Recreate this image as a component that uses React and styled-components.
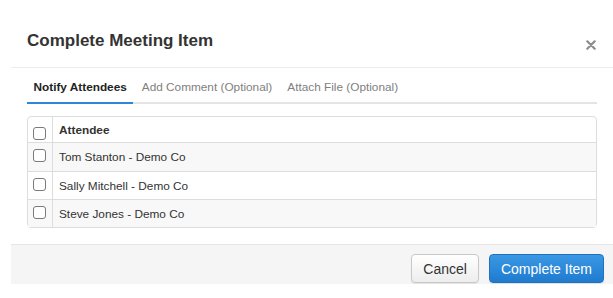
import React, {Component} from 'react';
import styled, {createGlobalStyle} from 'styled-components';

const attendees = [
  'Tom Stanton - Demo Co',
  'Sally Mitchell - Demo Co',
  'Steve Jones - Demo Co'
]

const tabs = ['Notify Attendees', 'Add Comment (Optional)', 'Attach File (Optional)']

class App extends Component {
  constructor(props) {
    super(props);
    this.state = {
      tab: 0,
      checked: []
    };
    this.toggle = this.toggle.bind(this)
  }

  toggle = (i) => {
    const checked = this.state.checked.includes(i)
      ? this.state.checked.filter(c => c !== i)
      : [...this.state.checked, i]
    this.setState({checked})
  }

  render() {
    return (
      <Modal>
        <GlobalStyle />
        <Header>
          <Title>Complete Meeting Item</Title>
          <Close title="close">
            <svg width="10" height="10" viewBox="0 0 10 10">
              <path d="M1.3 1.3 L8.7 8.7 M8.7 1.3 L1.3 8.7" stroke="#8c8c8c" strokeWidth="2.2" strokeLinecap="round" />
            </svg>
          </Close>
        </Header>

        <Body>
          <Tabs>
            {tabs.map((t, i) => (
              <Tab key={t} active={i === this.state.tab} onClick={() => this.setState({tab: i})}>{t}</Tab>
            ))}
          </Tabs>

          <Table>
            <thead>
              <tr>
                <CheckCell head><Check type="checkbox" /></CheckCell>
                <HeadCell>Attendee</HeadCell>
              </tr>
            </thead>
            <tbody>
              {attendees.map((name, i) => (
                <Row key={name} striped={i % 2 === 0}>
                  <CheckCell>
                    <Check type="checkbox" checked={this.state.checked.includes(i)} onChange={() => this.toggle(i)} />
                  </CheckCell>
                  <Cell>{name}</Cell>
                </Row>
              ))}
            </tbody>
          </Table>
        </Body>

        <Footer>
          <Button>Cancel</Button>
          <Button primary>Complete Item</Button>
        </Footer>
      </Modal>
    );
  }
}

const GlobalStyle = createGlobalStyle`
body {
  margin: 0;
  background: #fff;
  font-family: "Liberation Sans", Arial, Helvetica, sans-serif;
  color: #333;
}
`
const Modal = styled.div`
margin-left: 11px;
width: 602px;
background: #fff;
`
const Header = styled.div`
display: flex;
justify-content: space-between;
align-items: flex-start;
padding: 31px 17px 16px 16px;
border-bottom: 1px solid #ececec;
`
const Title = styled.h4`
margin: 0;
font-size: 17px;
line-height: 20px;
font-weight: bold;
color: #333;
`
const Close = styled.button`
border: none;
background: transparent;
padding: 0;
margin-top: 9px;
width: 10px;
height: 10px;
display: flex;
cursor: pointer;
`
const Body = styled.div`
padding: 11px 16px 16px 16px;
`
const Tabs = styled.ul`
display: flex;
gap: 2px;
margin: 0;
padding: 0;
list-style: none;
border-bottom: 2px solid #e4e4e4;
`
const Tab = styled.li`
padding: 0 6.5px 7px;
margin-bottom: -2px;
font-size: 11.8px;
line-height: 16px;
font-weight: ${p => p.active ? 'bold' : 'normal'};
color: ${p => p.active ? '#222' : '#808080'};
border-bottom: 2px solid ${p => p.active ? '#2f86d6' : 'transparent'};
cursor: pointer;
`
const Table = styled.table`
margin-top: 12px;
width: 100%;
border-collapse: separate;
border-spacing: 0;
border: 1px solid #dddddd;
border-radius: 4px;
font-size: 11.8px;
color: #333;
`
const Row = styled.tr`
background: ${p => p.striped ? '#f8f8f8' : '#fff'};
`
const CheckCell = styled.td`
width: 15px;
height: ${p => p.head ? '26px' : '28px'};
padding: ${p => p.head ? '10px 6px 0 5px' : '6px 6px 0 5px'};
vertical-align: top;
border-right: 1px solid #dddddd;
border-bottom: ${p => p.head ? '1px solid #dddddd' : 'none'};
box-sizing: border-box;
tr + tr & {
  border-top: 1px solid #dddddd;
}
`
const HeadCell = styled.th`
text-align: left;
padding: 0 6px;
font-weight: bold;
border-bottom: 1px solid #dddddd;
line-height: 14px;
`
const Cell = styled.td`
padding: 0 6px;
line-height: 14px;
tr + tr & {
  border-top: 1px solid #dddddd;
}
`
const Check = styled.input`
appearance: none;
-webkit-appearance: none;
display: block;
margin: 0;
width: 13px;
height: 13px;
border: 1px solid #7a7a7a;
border-radius: 3px;
background: #fff;
box-sizing: border-box;
cursor: pointer;
&:checked {
  background: #2f86d6;
  border-color: #2f86d6;
}
`
const Footer = styled.div`
display: flex;
justify-content: flex-end;
gap: 10px;
padding: 9px 9px 1px 0;
background: #f5f5f5;
border-top: 1px solid #e6e6e6;
`
const Button = styled.button`
height: 29px;
padding: 0 11px;
font-family: "Liberation Sans", Arial, Helvetica, sans-serif;
font-size: 14px;
border-radius: 4px;
cursor: pointer;
color: ${p => p.primary ? '#fff' : '#333'};
border: 1px solid ${p => p.primary ? '#1f72c0' : '#c8c8c8'};
background: ${p => p.primary
  ? 'linear-gradient(to bottom, #3b98e4 0%, #1f7bcf 100%)'
  : 'linear-gradient(to bottom, #ffffff 0%, #ededed 100%)'};
box-shadow: 0 1px 1px rgba(0, 0, 0, 0.08);
`
export default App;
